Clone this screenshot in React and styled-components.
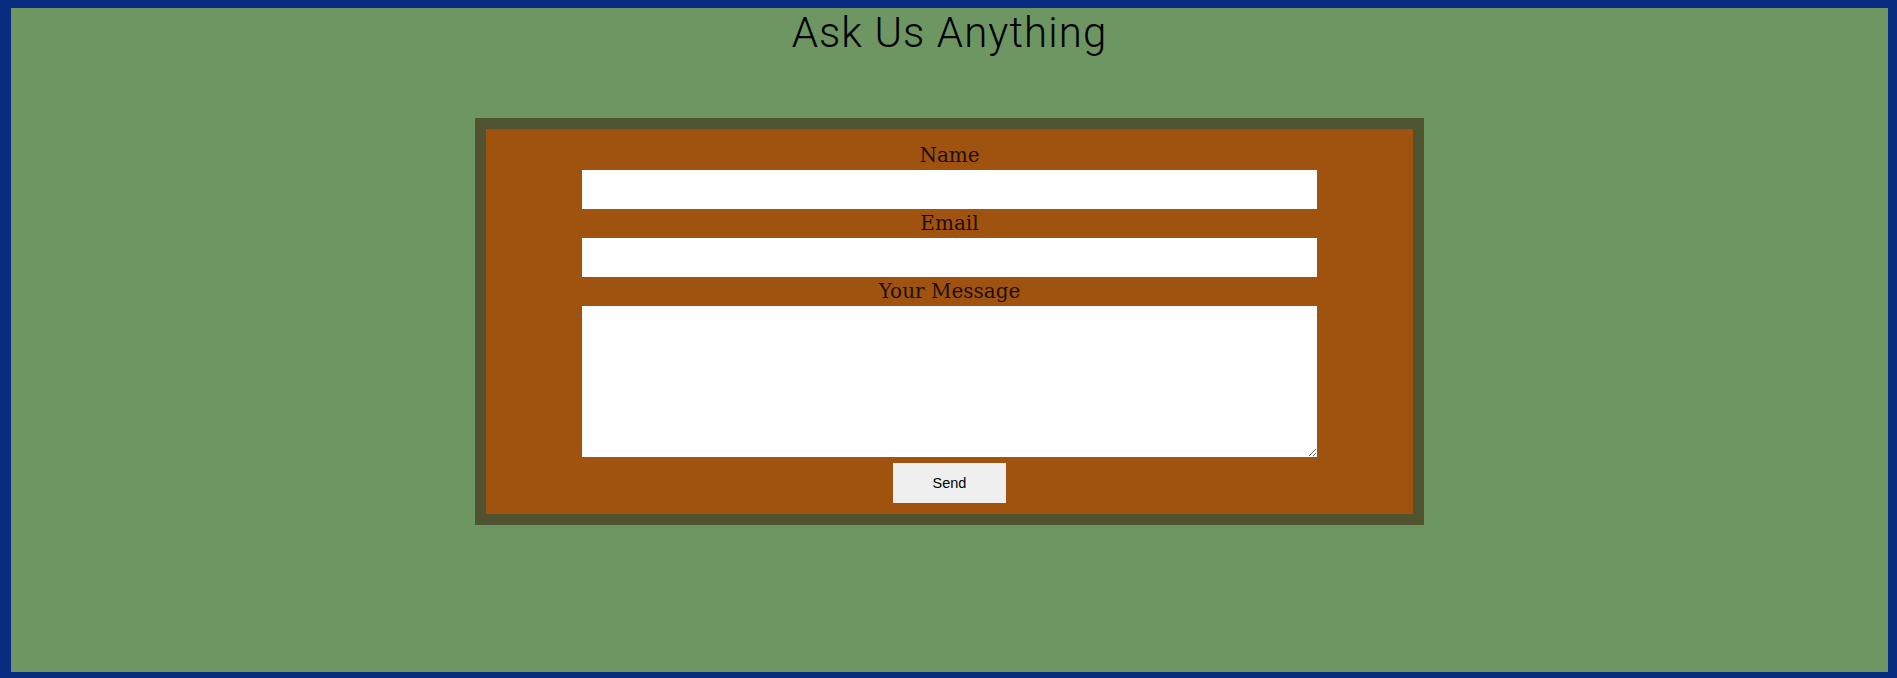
import React from "react";
import styled, { createGlobalStyle } from "styled-components";

const Global = createGlobalStyle`
  html, body { margin: 0; padding: 0; }
  body { background: #082d80; }
  * { box-sizing: border-box; }
`;

const Page = styled.div`
  margin: 8px 9px 6px 11px;
  height: calc(100vh - 14px);
  background: #6e9663;
  display: flex;
  flex-direction: column;
  align-items: center;
`;

const Title = styled.h1`
  margin: 0;
  padding-top: 1px;
  font-family: Roboto, "Noto Sans", sans-serif;
  font-weight: 300;
  font-size: 42px;
  line-height: 48px;
  letter-spacing: 1.1px;
  color: #000;
`;

const Card = styled.form`
  margin-top: 61px;
  width: 949px;
  border: 11px solid #4f5330;
  background: #a0530f;
  padding: 12px 96px 11px;
  display: flex;
  flex-direction: column;
  align-items: center;
`;

const Label = styled.label`
  font-family: "DejaVu Serif", serif;
  font-size: 20px;
  line-height: 29px;
  height: 29px;
  color: #1c0f02;
  text-align: center;
  width: 100%;
`;

const Field = styled.input`
  width: 100%;
  height: 39px;
  border: none;
  background: #fff;
  margin: 0;
  padding: 0 4px;
  outline: none;
`;

const Area = styled.textarea`
  width: 100%;
  height: 151px;
  border: none;
  background: #fff;
  margin: 0;
  padding: 4px;
  display: block;
  outline: none;
`;

const Send = styled.button`
  margin-top: 6px;
  width: 113px;
  height: 40px;
  border: none;
  background: #efefef;
  font-family: "Liberation Sans", Arial, sans-serif;
  font-size: 14.5px;
  color: #000;
`;

export default function App() {
  return (
    <>
      <Global />
      <Page>
        <Title>Ask Us Anything</Title>
        <Card onSubmit={(e) => e.preventDefault()}>
          <Label htmlFor="name">Name</Label>
          <Field id="name" type="text" />
          <Label htmlFor="email">Email</Label>
          <Field id="email" type="email" />
          <Label htmlFor="msg">Your Message</Label>
          <Area id="msg" />
          <Send type="submit">Send</Send>
        </Card>
      </Page>
    </>
  );
}
